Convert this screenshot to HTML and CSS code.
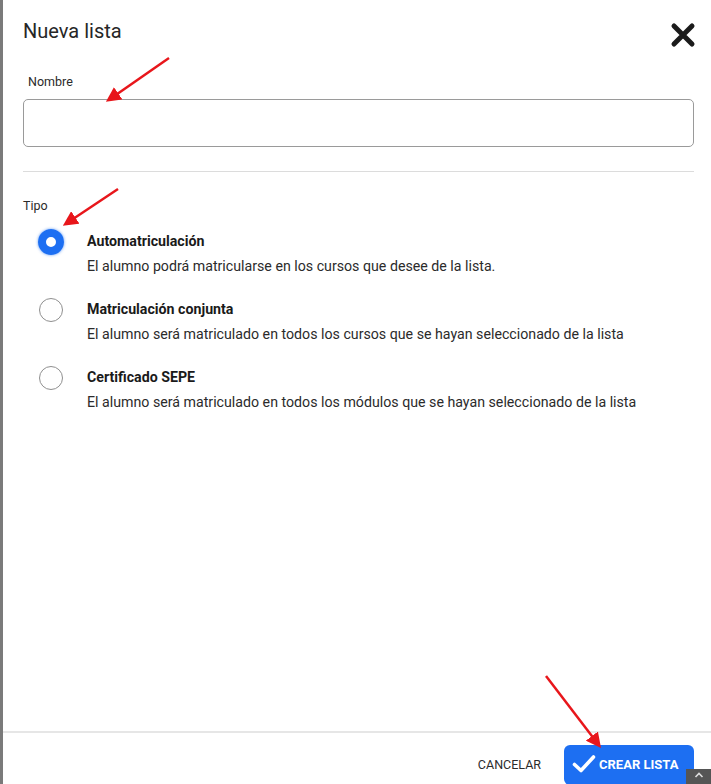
FILE: index.html
```html
<!DOCTYPE html>
<html lang="es">

<head>
  <meta charset="UTF-8">
  <meta name="viewport" content="width=device-width, initial-scale=1.0">
  <title>Nueva lista</title>
  <link rel="stylesheet" href="styles.css">
</head>

<body>
  <div class="modal">
    <div class="modal-body">
      <div class="modal-header">
        <h2>Nueva lista</h2>
        <button class="close-btn" type="button" aria-label="Cerrar">
          <svg width="26" height="26" viewBox="0 0 26 26">
            <path d="M4 4 L22 22 M22 4 L4 22" stroke="#1b1b1b" stroke-width="5" stroke-linecap="round" fill="none" />
          </svg>
        </button>
      </div>

      <label class="field-label" for="nombre">Nombre</label>
      <input class="text-input" type="text" id="nombre" name="nombre">

      <hr class="divider">

      <div class="field-label tipo">Tipo</div>

      <div class="options">
        <label class="option">
          <span class="radio checked"></span>
          <span class="option-text">
            <strong>Automatriculación</strong>
            <span>El alumno podrá matricularse en los cursos que desee de la lista.</span>
          </span>
        </label>
        <label class="option">
          <span class="radio"></span>
          <span class="option-text">
            <strong>Matriculación conjunta</strong>
            <span>El alumno será matriculado en todos los cursos que se hayan seleccionado de la lista</span>
          </span>
        </label>
        <label class="option">
          <span class="radio"></span>
          <span class="option-text">
            <strong>Certificado SEPE</strong>
            <span>El alumno será matriculado en todos los módulos que se hayan seleccionado de la lista</span>
          </span>
        </label>
      </div>
    </div>

    <!-- Footer -->
    <div class="modal-footer">
      <button class="btn-text" type="button">Cancelar</button>
      <button class="btn-primary" type="button">
        <svg width="24" height="20" viewBox="0 0 24 20">
          <path d="M2.5 10.5 L9 16.5 L21.5 3" stroke="#fff" stroke-width="3.6" stroke-linecap="round" stroke-linejoin="round" fill="none" />
        </svg>
        Crear lista
      </button>
    </div>
  </div>

  <div class="scroll-top">
    <svg width="10" height="8" viewBox="0 0 10 8">
      <path d="M1.5 6 L5 2.5 L8.5 6" stroke="#ddd" stroke-width="1.6" fill="none" />
    </svg>
  </div>

  <!-- annotation arrows -->
  <svg class="arrows" width="711" height="784" viewBox="0 0 711 784">
    <defs>
      <marker id="head" markerWidth="6" markerHeight="6" refX="4" refY="3" orient="auto" markerUnits="strokeWidth">
        <path d="M0 0 L6 3 L0 6 Z" fill="#e8161b" />
      </marker>
    </defs>
    <line x1="169" y1="58" x2="110" y2="99" stroke="#e8161b" stroke-width="2.5" marker-end="url(#head)" />
    <line x1="118" y1="189" x2="67" y2="223" stroke="#e8161b" stroke-width="2.5" marker-end="url(#head)" />
    <line x1="546" y1="676" x2="598" y2="744" stroke="#e8161b" stroke-width="2.5" marker-end="url(#head)" />
  </svg>
</body>

</html>
```

FILE: styles.css
```css
body {
  margin: 0;
  padding: 0;
  font-family: Roboto, 'Liberation Sans', sans-serif;
  background: #ffffff;
  color: #222;
}

.modal {
  height: 784px;
  border-left: 3px solid #7a7a7a;
  display: flex;
  flex-direction: column;
  box-sizing: border-box;
}

.modal-body {
  flex: 1;
  padding: 19px 17px 0 20px;
}

.modal-header {
  display: flex;
  justify-content: space-between;
  align-items: center;
  height: 24px;
}

.modal-header h2 {
  margin: 0;
  font-size: 20px;
  font-weight: 400;
  line-height: 24px;
  color: #262626;
}

.close-btn {
  background: none;
  border: none;
  padding: 0;
  margin-right: -2px;
  margin-top: 7px;
  cursor: pointer;
  display: flex;
}

.field-label {
  display: block;
  font-size: 12.5px;
  line-height: 16px;
  color: #2b2b2b;
  margin-top: 31px;
  padding-left: 5px;
}

.text-input {
  display: block;
  box-sizing: border-box;
  width: 100%;
  height: 48px;
  margin-top: 9px;
  border: 1px solid #9a9a9a;
  border-radius: 5px;
  font-size: 14px;
  padding: 0 12px;
  outline: none;
}

.divider {
  border: none;
  border-top: 1px solid #dcdcdc;
  margin: 24px 0 0;
}

.field-label.tipo {
  margin-top: 26px;
  padding-left: 0;
}

.options {
  display: flex;
  flex-direction: column;
  gap: 23px;
  margin-top: 17px;
}

.option {
  display: flex;
  align-items: flex-start;
  gap: 23px;
  padding-left: 15px;
  cursor: pointer;
}

.radio {
  width: 24px;
  height: 24px;
  box-sizing: border-box;
  border: 1px solid #8f8f8f;
  border-radius: 50%;
  margin-top: -1px;
  margin-left: 1px;
  margin-right: 1px;
  flex-shrink: 0;
}

.radio.checked {
  width: 26px;
  height: 26px;
  margin: -2px 0 0;
  border: 8.5px solid #1d6ff2;
  box-shadow: 0 0 3px rgba(29, 111, 242, 0.7);
}

.option-text {
  display: flex;
  flex-direction: column;
}

.option-text strong {
  font-size: 14.2px;
  line-height: 20px;
  font-weight: 700;
  color: #1a1a1a;
}

.option-text span {
  font-size: 14.2px;
  line-height: 20px;
  margin-top: 5px;
  color: #2b2b2b;
}

.modal-footer {
  border-top: 2px solid #e6e6e6;
  display: flex;
  justify-content: flex-end;
  align-items: flex-start;
  gap: 23px;
  padding: 12px 17px 0 0;
  height: 53px;
  box-sizing: border-box;
  overflow: hidden;
}

.btn-text {
  background: none;
  border: none;
  font-family: inherit;
  font-size: 12.5px;
  text-transform: uppercase;
  color: #2b2b2b;
  height: 38px;
  padding: 0;
  cursor: pointer;
}

.btn-primary {
  background: #1d6ff2;
  color: #fff;
  border: none;
  border-radius: 6px;
  font-family: inherit;
  font-size: 13px;
  font-weight: 700;
  text-transform: uppercase;
  height: 40px;
  width: 130px;
  display: flex;
  align-items: center;
  gap: 3px;
  padding: 0 0 2px 8px;
  cursor: pointer;
}

.scroll-top {
  position: absolute;
  right: 0;
  top: 769px;
  width: 25px;
  height: 15px;
  background: #555;
  display: flex;
  justify-content: center;
  align-items: flex-start;
  padding-top: 2px;
  box-sizing: border-box;
}

.arrows {
  position: absolute;
  left: 0;
  top: 0;
  pointer-events: none;
}
```
